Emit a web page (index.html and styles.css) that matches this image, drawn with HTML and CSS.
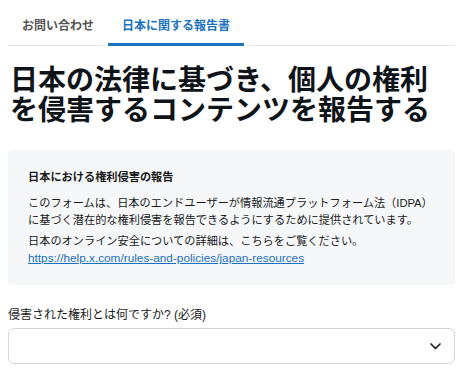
FILE: index.html
```html
<!DOCTYPE html>
<html lang="ja">
<head>
    <meta charset="UTF-8">
    <meta name="viewport" content="width=device-width, initial-scale=1.0">
    <title>日本に関する報告書</title>
    <link rel="stylesheet" href="styles.css">
</head>
<body>

<div class="page">
    <nav class="tabs">
        <a class="tab" href="#">お問い合わせ</a>
        <a class="tab active" href="#">日本に関する報告書</a>
    </nav>

    <h1>日本の法律に基づき、個人の権利を侵害するコンテンツを報告する</h1>

    <div class="notice">
        <h4>日本における権利侵害の報告</h4>
        <p>このフォームは、日本のエンドユーザーが情報流通プラットフォーム法（IDPA）に基づく潜在的な権利侵害を報告できるようにするために提供されています。</p>
        <p>日本のオンライン安全についての詳細は、こちらをご覧ください。<br>
            <a href="#">https://help.x.com/rules-and-policies/japan-resources</a></p>
    </div>

    <div class="field">
        <label for="right-type">侵害された権利とは何ですか? (必須)</label>
        <div class="select-box" id="right-type" tabindex="0">
            <svg width="11" height="7" viewBox="0 0 11 7">
                <path d="M1 1l4.5 4.5L10 1" fill="none" stroke="#222" stroke-width="1.7" stroke-linecap="round" stroke-linejoin="round"/>
            </svg>
        </div>
    </div>
</div>

</body>
</html>
```

FILE: styles.css
```css
body {
    font-family: 'Liberation Sans', 'Noto Sans CJK JP', sans-serif;
    background-color: #fff;
    color: #1a1a1a;
    margin: 0;
}
.page {
    width: 447px;
    padding: 0 8px;
}
.tabs {
    display: flex;
    border-bottom: 1px solid #e6e8eb;
}
.tab {
    font-size: 12px;
    font-weight: bold;
    line-height: 16px;
    color: #555;
    text-decoration: none;
    padding: 18px 14px 9px;
    border-bottom: 3px solid transparent;
    margin-bottom: -1px;
}
.tab.active {
    color: #1b72bd;
    border-bottom-color: #1b72bd;
}
h1 {
    font-size: 28px;
    line-height: 30px;
    font-weight: bold;
    color: #0f1419;
    margin: 20px 0 24px 2px;
}
.notice {
    background-color: #f5f7f9;
    border-radius: 4px;
    padding: 19px 20px 18px;
    font-size: 0.7rem;
    line-height: 17px;
}
.notice h4 {
    margin: 0 0 9px;
    font-size: 0.7rem;
    font-weight: bold;
}
.notice p {
    margin: 0 0 4px;
}
.notice p:last-child {
    margin-bottom: 0;
}
.notice a {
    font-size: 11.8px;
    color: #1d6fc0;
}
.field {
    margin-top: 22px;
}
.field label {
    display: block;
    font-size: 12px;
    line-height: 17px;
    margin-bottom: 4px;
}
.select-box {
    height: 34px;
    border: 1px solid #d4d6d9;
    border-radius: 6px;
    display: flex;
    align-items: center;
    justify-content: flex-end;
    padding-right: 13px;
    background-color: #fff;
}
```
